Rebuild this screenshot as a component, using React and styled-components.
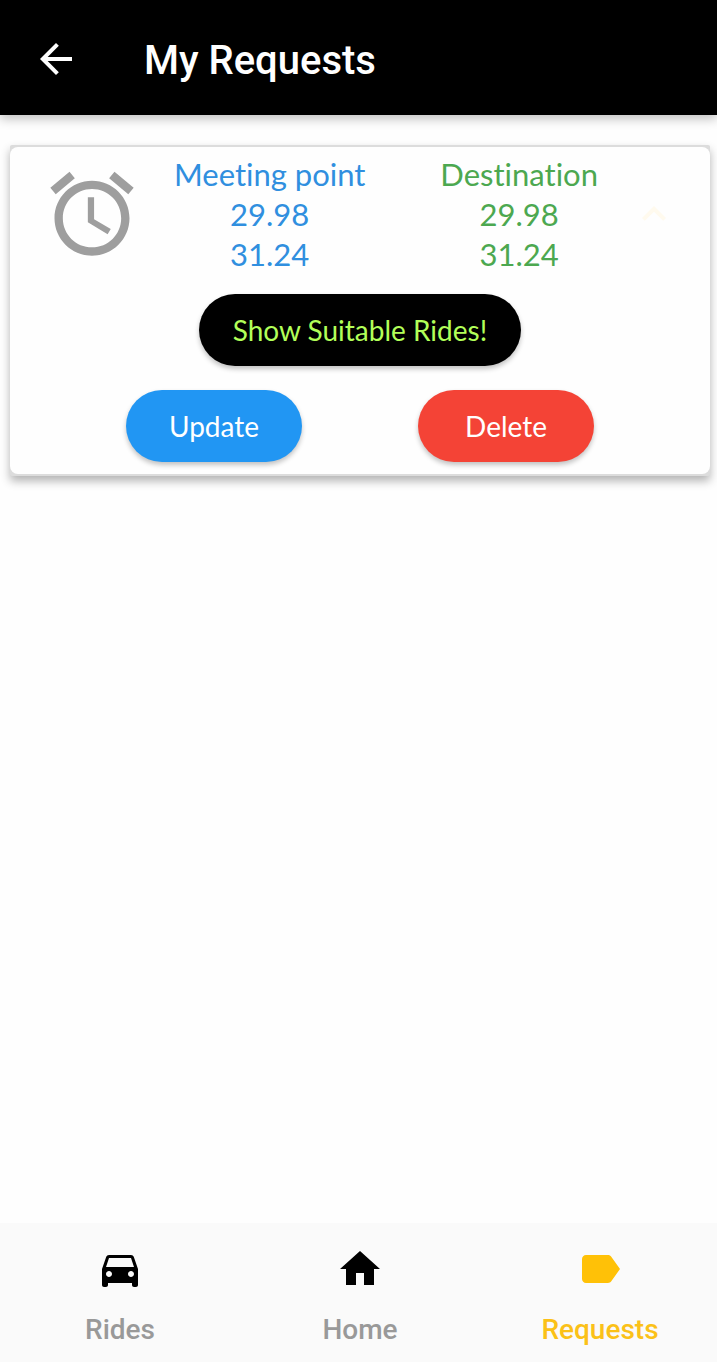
import React from "react";
import styled, { createGlobalStyle } from "styled-components";

const GlobalStyle = createGlobalStyle`
  *, *::before, *::after { box-sizing: border-box; }
  body {
    margin: 0;
    background: #fefefe;
    font-family: Roboto, "Liberation Sans", sans-serif;
  }
  button { border: 0; padding: 0; background: none; font: inherit; cursor: pointer; }
`;

const Screen = styled.div`
  display: flex;
  flex-direction: column;
  min-height: 100vh;
`;

const AppBar = styled.header`
  display: flex;
  align-items: flex-start;
  gap: 64px;
  padding: 35px 32px 29px;
  background: #000;
  color: #fff;
  box-shadow: 0 4px 10px rgba(0, 0, 0, 0.24);
`;

const IconButton = styled.button`
  display: flex;
  color: ${(p) => p.$color || "inherit"};
`;

const Title = styled.h1`
  margin: 0;
  font-size: 40px;
  line-height: 51px;
  font-weight: 500;
`;

const Icon = styled.svg`
  display: block;
  flex: none;
  width: ${(p) => p.$size || 48}px;
  height: ${(p) => p.$size || 48}px;
  fill: currentColor;
`;

const Content = styled.main`
  flex: 1;
  padding: 30px 7px 30px 10px;
`;

const CardFrame = styled.article`
  border: solid #dcdcdc;
  border-width: 2px 0;
  background: #dcdcdc;
  border-radius: 2px;
  box-shadow: 0 5px 10px rgba(0, 0, 0, 0.3);
`;

const CardBody = styled.div`
  display: flex;
  flex-direction: column;
  gap: 24px;
  padding: 7px 0 12px;
  border-radius: 8px;
  background: #fefefe;
  font-family: Lato, "Open Sans", sans-serif;
  font-variant-ligatures: none;
`;

const Summary = styled.div`
  display: flex;
  align-items: center;
  gap: 32px;
  padding: 0 32px;
  margin-bottom: -4px;
  color: #9e9e9e;
`;

const Places = styled.div`
  flex: 1;
  display: flex;
  justify-content: space-between;
`;

const Place = styled.div`
  color: ${(p) => p.$color};
  font-size: 31px;
  line-height: 40px;
  text-align: center;
`;

const Actions = styled.div`
  display: flex;
  justify-content: space-evenly;
`;

const PillButton = styled.button`
  && {
    min-width: 176px;
    height: 72px;
    padding: 0 34px;
    border-radius: 36px;
    background: ${(p) => p.$background};
    color: ${(p) => p.$color || "#fff"};
    font-size: 28px;
    box-shadow: 0 3px 5px rgba(0, 0, 0, 0.24);
  }
`;

const BottomNav = styled.nav`
  display: grid;
  grid-template-columns: repeat(3, 1fr);
  column-gap: 6px;
  padding: 22px 0 15px 3px;
  background: #fafafa;
`;

const NavLink = styled.a`
  display: flex;
  flex-direction: column;
  align-items: center;
  gap: 20px;
  color: ${(p) => (p.$active ? "#ffc107" : "#000")};
  text-decoration: none;
`;

const NavLabel = styled.span`
  color: ${(p) => (p.$active ? "#fbc118" : "#999")};
  font-size: 28px;
  line-height: 34px;
  font-weight: 500;
`;

const paths = {
  back: "M20 11H7.83l5.59-5.59L12 4l-8 8 8 8 1.41-1.41L7.83 13H20v-2z",
  alarm:
    "M22 5.72l-4.6-3.86-1.29 1.53 4.6 3.86L22 5.72zM7.88 3.39L6.6 1.86 2 5.71l1.29 1.53 4.59-3.85zM12.5 8H11v6l4.75 2.85.75-1.23-4-2.37V8zM12 4c-4.97 0-9 4.03-9 9s4.02 9 9 9c4.97 0 9-4.03 9-9s-4.03-9-9-9zm0 16c-3.87 0-7-3.13-7-7s3.13-7 7-7 7 3.13 7 7-3.13 7-7 7z",
  collapse: "M12 8l-6 6 1.41 1.41L12 10.83l4.59 4.58L18 14z",
  car: "M18.92 6.01C18.72 5.42 18.16 5 17.5 5h-11c-.66 0-1.21.42-1.42 1.01L3 12v8c0 .55.45 1 1 1h1c.55 0 1-.45 1-1v-1h12v1c0 .55.45 1 1 1h1c.55 0 1-.45 1-1v-8l-2.08-5.99zM6.5 16c-.83 0-1.5-.67-1.5-1.5S5.67 13 6.5 13s1.5.67 1.5 1.5S7.33 16 6.5 16zm11 0c-.83 0-1.5-.67-1.5-1.5s.67-1.5 1.5-1.5 1.5.67 1.5 1.5-.67 1.5-1.5 1.5zM5 11l1.5-4.5h11L19 11H5z",
  home: "M10 20v-6h4v6h5v-8h3L12 3 2 12h3v8z",
  label:
    "M17.63 5.84C17.27 5.33 16.67 5 16 5L5 5.01C3.9 5.01 3 5.9 3 7v10c0 1.1.9 1.99 2 1.99L16 19c.67 0 1.27-.33 1.63-.84L22 12l-4.37-6.16z",
};

function Glyph({ name, size }) {
  return (
    <Icon viewBox="0 0 24 24" $size={size} aria-hidden="true">
      <path d={paths[name]} />
    </Icon>
  );
}

const places = [
  { name: "Meeting point", lat: "29.98", lng: "31.24", color: "#308fdf" },
  { name: "Destination", lat: "29.98", lng: "31.24", color: "#4ca850" },
];

const tabs = [
  { label: "Rides", icon: "car" },
  { label: "Home", icon: "home" },
  { label: "Requests", icon: "label", active: true },
];

export default function App() {
  return (
    <Screen>
      <GlobalStyle />
      <AppBar>
        <IconButton type="button" aria-label="Back">
          <Glyph name="back" />
        </IconButton>
        <Title>My Requests</Title>
      </AppBar>
      <Content>
        <CardFrame>
          <CardBody>
            <Summary>
              <Glyph name="alarm" size={100} />
              <Places>
                {places.map((p) => (
                  <Place key={p.name} $color={p.color}>
                    <div>{p.name}</div>
                    <div>{p.lat}</div>
                    <div>{p.lng}</div>
                  </Place>
                ))}
              </Places>
              <IconButton type="button" aria-label="Collapse" $color="#fffaee">
                <Glyph name="collapse" />
              </IconButton>
            </Summary>
            <Actions>
              <PillButton type="button" $background="#000" $color="#b2ff59">
                Show Suitable Rides!
              </PillButton>
            </Actions>
            <Actions>
              <PillButton type="button" $background="#2196f3">Update</PillButton>
              <PillButton type="button" $background="#f44336">Delete</PillButton>
            </Actions>
          </CardBody>
        </CardFrame>
      </Content>
      <BottomNav>
        {tabs.map((t) => (
          <NavLink
            key={t.label}
            href={`#${t.label.toLowerCase()}`}
            $active={t.active}
            aria-current={t.active ? "page" : undefined}
          >
            <Glyph name={t.icon} />
            <NavLabel $active={t.active}>{t.label}</NavLabel>
          </NavLink>
        ))}
      </BottomNav>
    </Screen>
  );
}
